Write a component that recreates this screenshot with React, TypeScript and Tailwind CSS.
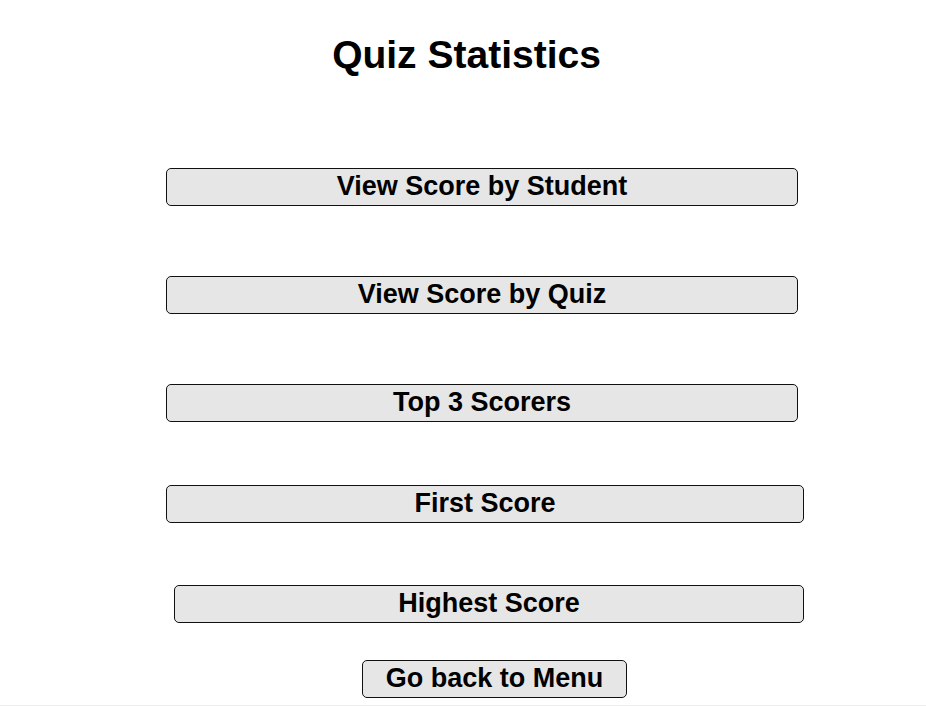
import React from 'react';

const btn =
  'h-[38px] rounded-[5px] border border-[#111] bg-[#e6e6e6] text-[27px] font-bold text-black leading-none flex items-center justify-center pb-[1px]';

const App = (): JSX.Element => {
  return (
    <div className="w-[926px] h-[707px] bg-white font-['Liberation_Sans',Arial,sans-serif] flex flex-col">
      <div className="flex-1 flex flex-col">
        {/* heading */}
        <h1 className="mt-[33px] ml-[300px] w-[333px] text-center text-[39px] font-bold leading-[44px] text-black whitespace-nowrap">
          Quiz Statistics
        </h1>

        {/* menu buttons */}
        <button className={`${btn} mt-[91px] ml-[166px] w-[632px]`}>View Score by Student</button>
        <button className={`${btn} mt-[70px] ml-[166px] w-[632px]`}>View Score by Quiz</button>
        <button className={`${btn} mt-[70px] ml-[166px] w-[632px]`}>Top 3 Scorers</button>
        <button className={`${btn} mt-[63px] ml-[166px] w-[638px]`}>First Score</button>
        <button className={`${btn} mt-[62px] ml-[174px] w-[630px]`}>Highest Score</button>
        <button className={`${btn} mt-[37px] ml-[362px] w-[265px]`}>Go back to Menu</button>
      </div>
      <div className="h-[2px] border-t border-[#eeeeee]"></div>
    </div>
  );
};

export default App;
